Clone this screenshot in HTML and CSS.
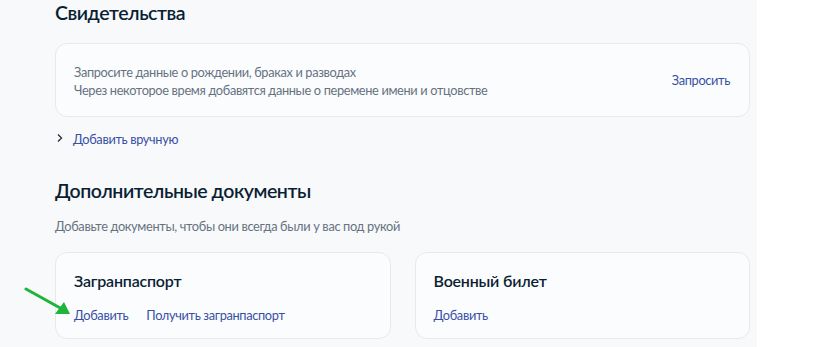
FILE: index.html
```html
<!DOCTYPE html>
<html lang="ru">
<head>
    <meta charset="UTF-8">
    <meta name="viewport" content="width=device-width, initial-scale=1.0">
    <title>Документы</title>
    <link rel="stylesheet" href="styles.css">
</head>
<body>
    <div class="page">
        <h2 class="section-title">Свидетельства</h2>

        <div class="card card-request">
            <div class="card-text">
                <p>Запросите данные о рождении, браках и разводах</p>
                <p>Через некоторое время добавятся данные о перемене имени и отцовстве</p>
            </div>
            <a href="#" class="link">Запросить</a>
        </div>

        <a href="#" class="manual-add">
            <svg class="chevron" width="8" height="10" viewBox="0 0 8 10"><path d="M2 1.5 L5.5 5 L2 8.5" fill="none" stroke="#2c3440" stroke-width="1.4"/></svg>
            <span class="link">Добавить вручную</span>
        </a>

        <h2 class="section-title extra-title">Дополнительные документы</h2>
        <p class="section-sub">Добавьте документы, чтобы они всегда были у вас под рукой</p>

        <div class="doc-grid">
            <div class="card doc-card">
                <div class="doc-title">Загранпаспорт</div>
                <div class="doc-links">
                    <a href="#" class="link">Добавить</a>
                    <a href="#" class="link">Получить загранпаспорт</a>
                </div>
                <svg class="pointer" width="50" height="30" viewBox="0 0 50 30">
                    <line x1="2" y1="2" x2="38" y2="22" stroke="#1fb53a" stroke-width="3" stroke-linecap="round"/>
                    <polygon points="46,27 31,27 40,15" fill="#1fb53a"/>
                </svg>
            </div>
            <div class="card doc-card">
                <div class="doc-title">Военный билет</div>
                <div class="doc-links">
                    <a href="#" class="link">Добавить</a>
                </div>
            </div>
        </div>
    </div>
</body>
</html>
```

FILE: styles.css
```css
body {
    margin: 0;
    padding: 0;
    font-family: Lato, "Noto Sans", sans-serif;
    background-color: #fff;
    color: #0b1f33;
}

.page {
    width: 695px;
    height: 347px;
    padding: 0 7px 0 55px;
    background-color: #f8f9fb;
    overflow: hidden;
}

.section-title {
    margin: 0;
    font-size: 19.5px;
    line-height: 26px;
    font-weight: 600;
    letter-spacing: -0.45px;
    color: #0b1f33;
}

.card {
    background-color: #fbfcfe;
    border: 1px solid #e6e9ee;
    border-radius: 12px;
    box-sizing: border-box;
}

.card-request {
    margin-top: 17px;
    height: 74px;
    padding: 0 19px 0 18px;
    display: flex;
    align-items: center;
    justify-content: space-between;
}

.card-text {
    margin-top: 2px;
}

.card-text p {
    margin: 0;
    font-size: 12.8px;
    line-height: 18px;
    letter-spacing: -0.35px;
    color: #66727f;
}

.link {
    color: #3850a4;
    text-decoration: none;
    font-size: 12.8px;
    line-height: 18px;
    letter-spacing: -0.35px;
}

.manual-add {
    display: flex;
    align-items: center;
    gap: 9px;
    margin-top: 12px;
    text-decoration: none;
    height: 20px;
}

.chevron {
    margin-left: 1px;
    margin-top: -3px;
}

.extra-title {
    margin-top: 29px;
}

.section-sub {
    margin: 13px 0 0;
    font-size: 12.8px;
    line-height: 18px;
    letter-spacing: -0.35px;
    color: #66727f;
}

.doc-grid {
    margin-top: 17px;
    display: grid;
    grid-template-columns: 1fr 1fr;
    gap: 24px;
}

.doc-card {
    position: relative;
    height: 87px;
    padding: 18px 18px 0;
}

.doc-title {
    font-size: 16px;
    line-height: 20px;
    font-weight: 600;
    letter-spacing: -0.2px;
    color: #0b1f33;
}

.doc-links {
    margin-top: 15px;
    display: flex;
    gap: 18px;
}

.pointer {
    position: absolute;
    left: -32px;
    top: 34px;
}
```
